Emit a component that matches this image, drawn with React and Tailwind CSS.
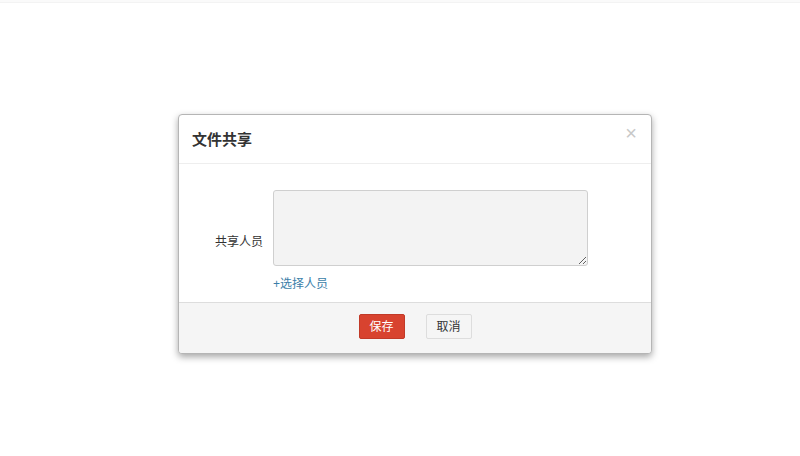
import React from "react";

export default function App() {
    return (
        <div className="w-[800px] h-[456px] bg-white font-['Liberation_Sans','Noto_Sans_CJK_SC',sans-serif] text-[#333]">
            <div className="h-[3px] bg-[#fafafa] border-b border-[#f3f3f3]" />
            <div className="pt-[111px] pl-[178px]">
                <div className="w-[474px] bg-white border border-[#b5b5b5] rounded-[4px] shadow-[0_3px_7px_rgba(0,0,0,0.35)] overflow-hidden">
                    <div className="h-[49px] flex items-center justify-between pl-[13px] pr-[14px] border-b border-[#eeeeee]">
                        <h3 className="text-[15px] font-bold text-[#333] mt-[2px]">文件共享</h3>
                        <span className="text-[20px] leading-none text-[#c8c8c8] -mt-[13px]">×</span>
                    </div>
                    <div className="h-[138px] pt-[26px]">
                        <div className="flex">
                            <label className="w-[84px] text-right text-[12px] text-[#333] pt-[43px]">共享人员</label>
                            <div className="ml-[10px]">
                                <textarea
                                    readOnly
                                    className="block w-[315px] h-[76px] bg-[#f3f3f3] border border-[#cfcfcf] rounded-[3px]"
                                />
                                <a className="block mt-[9px] text-[12px] text-[#3b7ea8]">+选择人员</a>
                            </div>
                        </div>
                    </div>
                    <div className="h-[51px] bg-[#f5f5f5] border-t border-[#dddddd] flex items-start pt-[11px] justify-center gap-[21px]">
                        <button
                            type="button"
                            className="w-[46px] h-[25px] bg-[#d8432f] border border-[#c13a28] rounded-[2px] text-white text-[12px]"
                        >
                            保存
                        </button>
                        <button
                            type="button"
                            className="w-[46px] h-[25px] bg-[#f5f5f5] border border-[#dddddd] rounded-[2px] text-[#333] text-[12px]"
                        >
                            取消
                        </button>
                    </div>
                </div>
            </div>
        </div>
    );
}
